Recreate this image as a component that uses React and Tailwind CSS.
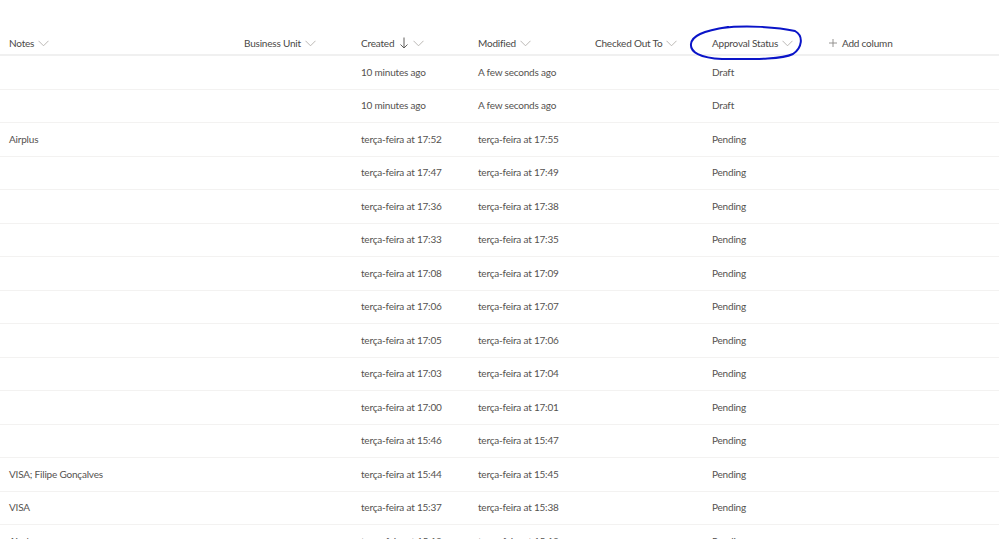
import React from "react";

const rows = [
  ["", "10 minutes ago", "A few seconds ago", "Draft"],
  ["", "10 minutes ago", "A few seconds ago", "Draft"],
  ["Airplus", "terça-feira at 17:52", "terça-feira at 17:55", "Pending"],
  ["", "terça-feira at 17:47", "terça-feira at 17:49", "Pending"],
  ["", "terça-feira at 17:36", "terça-feira at 17:38", "Pending"],
  ["", "terça-feira at 17:33", "terça-feira at 17:35", "Pending"],
  ["", "terça-feira at 17:08", "terça-feira at 17:09", "Pending"],
  ["", "terça-feira at 17:06", "terça-feira at 17:07", "Pending"],
  ["", "terça-feira at 17:05", "terça-feira at 17:06", "Pending"],
  ["", "terça-feira at 17:03", "terça-feira at 17:04", "Pending"],
  ["", "terça-feira at 17:00", "terça-feira at 17:01", "Pending"],
  ["", "terça-feira at 15:46", "terça-feira at 15:47", "Pending"],
  ["VISA; Filipe Gonçalves", "terça-feira at 15:44", "terça-feira at 15:45", "Pending"],
  ["VISA", "terça-feira at 15:37", "terça-feira at 15:38", "Pending"],
  ["Airplus", "terça-feira at 15:12", "terça-feira at 15:13", "Pending"],
];

function Chevron() {
  return (
    <svg width="11" height="7" viewBox="0 0 11 7" className="ml-[4px] mt-[1px]">
      <path d="M0.5 0.8 L5.5 5.8 L10.5 0.8" fill="none" stroke="#b3b0ad" strokeWidth="0.9" />
    </svg>
  );
}

function Head({ label, w, arrow }) {
  return (
    <div className={`flex items-center pl-[9px] shrink-0 ${w}`}>
      <span>{label}</span>
      {arrow && (
        <svg width="10" height="12" viewBox="0 0 10 12" className="ml-[5px]">
          <path d="M5 0.5 V11 M1.5 7.5 L5 11 L8.5 7.5" fill="none" stroke="#605e5c" strokeWidth="1" />
        </svg>
      )}
      <Chevron />
    </div>
  );
}

export default function App() {
  return (
    <div
      className="relative w-[999px] h-[539px] overflow-hidden bg-white text-[10px] tracking-[-0.2px] text-[#55524f]"
      style={{ fontFamily: 'Lato, "Open Sans", sans-serif' }}
    >
      <div className="h-[31px]" />
      <div className="flex h-[25px] pt-[1px] border-b-2 border-[#f0f0f0] text-[#4a4846]">
        <Head label="Notes" w="w-[235px]" />
        <Head label="Business Unit" w="w-[117px]" />
        <Head label="Created" w="w-[117px]" arrow />
        <Head label="Modified" w="w-[117px]" />
        <Head label="Checked Out To" w="w-[117px]" />
        <Head label="Approval Status" w="w-[117px]" />
        <div className="flex items-center pl-[9px] text-[#4a4846]">
          <svg width="8" height="8" viewBox="0 0 8 8" className="mr-[5px]">
            <path d="M4 0 V8 M0 4 H8" fill="none" stroke="#8a8886" strokeWidth="0.9" />
          </svg>
          <span>Add column</span>
        </div>
      </div>
      {rows.map((r, i) => (
        <div key={i} className="flex items-center h-[33.5px] border-b border-[#f3f2f1]">
          <div className="w-[235px] pl-[9px] shrink-0">{r[0]}</div>
          <div className="w-[117px] shrink-0" />
          <div className="w-[117px] pl-[9px] shrink-0">{r[1]}</div>
          <div className="w-[117px] pl-[9px] shrink-0">{r[2]}</div>
          <div className="w-[117px] shrink-0" />
          <div className="w-[117px] pl-[9px] shrink-0">{r[3]}</div>
        </div>
      ))}
      <svg className="absolute left-0 top-0 pointer-events-none" width="999" height="539">
        <path
          d="M722 28 C745 25 778 27 795 31 C804 36 802 48 793 54 C780 60 750 59 722 59 C700 58 690 52 691 44 C692 36 702 31 728 27"
          fill="none"
          stroke="#0a14c8"
          strokeWidth="2"
          strokeLinecap="round"
        />
      </svg>
    </div>
  );
}
